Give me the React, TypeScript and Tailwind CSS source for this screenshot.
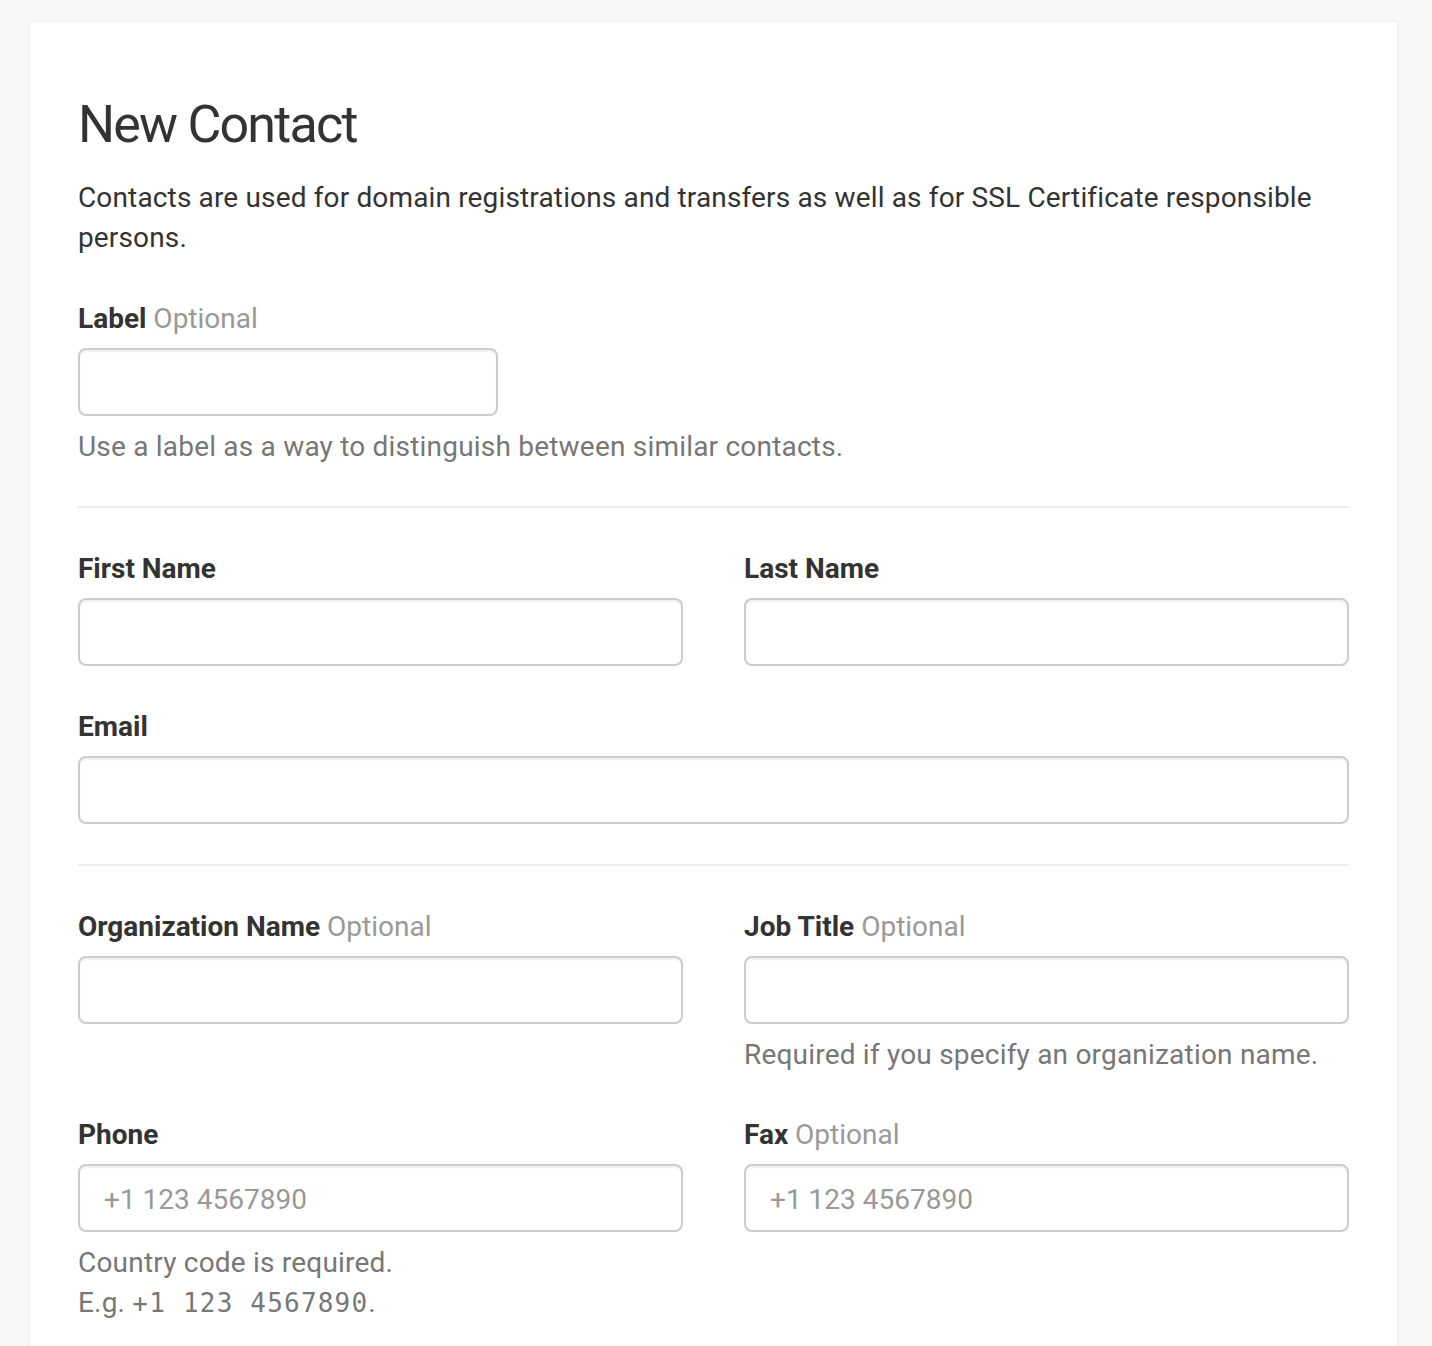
import React from 'react';

const Field = ({
  label,
  optional,
  placeholder,
  help,
  className = '',
}: {
  label: string;
  optional?: boolean;
  placeholder?: string;
  help?: React.ReactNode;
  className?: string;
}) => {
  return (
    <div className={className}>
      <label className="block text-[28px] leading-[40px] font-bold text-[#333] mb-[9px]">
        {label}
        {optional && <span className="font-normal text-[#999]"> Optional</span>}
      </label>
      <input
        type="text"
        placeholder={placeholder}
        className="block w-full h-[68px] border-2 border-[#ccc] rounded-[8px] bg-white px-[24px] pt-[3px] text-[28px] text-[#333] placeholder:text-[#999] shadow-[inset_0_2px_2px_rgba(0,0,0,0.06)] outline-none"
      />
      {help && (
        <div className="mt-[11px] text-[28px] leading-[40px] tracking-[0.2px] text-[#777]">{help}</div>
      )}
    </div>
  );
};

const App = () => {
  return (
    <div className="min-h-[1346px] bg-[#f8f8f8] pt-[22px] pl-[30px] pr-[35px] font-['Roboto',sans-serif] overflow-hidden">
      <div className="bg-white shadow-[0_0_4px_rgba(0,0,0,0.06)] px-[48px] pt-[74px] pb-[60px] min-h-[1324px]">
        <h1 className="text-[52px] leading-[57px] font-normal tracking-[-1.8px] text-[#333] mb-[25px]">
          New Contact
        </h1>
        <p className="text-[28px] leading-[40px] tracking-[0.15px] text-[#333] mb-[41px]">
          Contacts are used for domain registrations and transfers as well as for SSL Certificate responsible persons.
        </p>

        <Field
          label="Label"
          optional
          className="w-[420px]"
          help={<span className="whitespace-nowrap">Use a label as a way to distinguish between similar contacts.</span>}
        />

        <hr className="mt-[39px] mb-[41px] border-0 border-t-2 border-[#eee]" />

        <div className="grid grid-cols-2 gap-x-[61px] gap-y-[41px]">
          <Field label="First Name" />
          <Field label="Last Name" />
          <Field label="Email" className="col-span-2" />
        </div>

        <hr className="mt-[40px] mb-[41px] border-0 border-t-2 border-[#eee]" />

        <div className="grid grid-cols-2 gap-x-[61px] gap-y-[40px]">
          <Field label="Organization Name" optional />
          <Field label="Job Title" optional help="Required if you specify an organization name." />
          <Field
            label="Phone"
            placeholder="+1 123 4567890"
            help={
              <>
                Country code is required.
                <br />
                E.g.{' '}
                <code className="font-['DejaVu_Sans_Mono',monospace] text-[26px] tracking-[1.2px]">+1 123 4567890</code>.
              </>
            }
          />
          <Field label="Fax" optional placeholder="+1 123 4567890" />
        </div>
      </div>
    </div>
  );
};

export default App;
